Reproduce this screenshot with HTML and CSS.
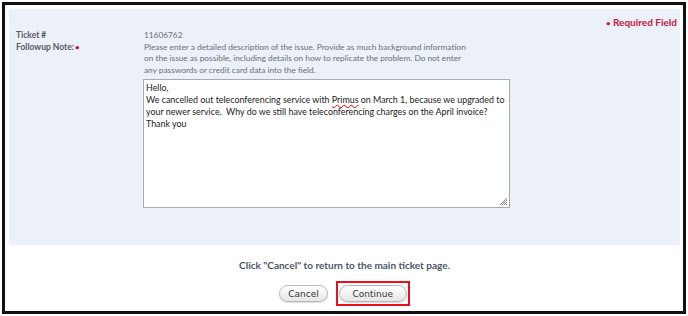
FILE: index.html
```html
<!DOCTYPE html>
<html>
<head>
<meta charset="utf-8">
<link rel="stylesheet" href="styles.css">
</head>
<body>
<div class="frame">
  <div class="panel">
    <div class="req"><span class="dot">&#8226;</span> Required Field</div>
    <div class="form">
      <div class="labels">
        <div class="label">Ticket #</div>
        <div class="label">Followup Note:<span class="star">&#8226;</span></div>
      </div>
      <div class="fields">
        <div class="tnum">11606762</div>
        <div class="help">Please enter a detailed description of the issue. Provide as much background information on the issue as possible, including details on how to replicate the problem. Do not enter any passwords or credit card data into the field.</div>
        <div class="ta">
          <div>Hello,</div>
          <div>We cancelled out teleconferencing service with <span class="spell">Primus</span> on March 1, because we upgraded to your newer service.&nbsp; Why do we still have teleconferencing charges on the April invoice?</div>
          <div>Thank you</div>
          <svg class="grip" width="10" height="10" viewBox="0 0 10 10"><path d="M9 2 L2 9 M9 4 L4 9 M9 6 L6 9 M9 8 L8 9" stroke="#888" stroke-width="1"/></svg>
        </div>
      </div>
    </div>
  </div>
  <div class="bottom">
    <div class="note">Click "Cancel" to return to the main ticket page.</div>
    <div class="btns">
      <button class="btn">Cancel</button>
      <div class="hl"><button class="btn cont">Continue</button></div>
    </div>
  </div>
</div>
</body>
</html>
```
FILE: styles.css
```css
html, body { margin: 0; padding: 0; background: #fff; }
body { font-family: Lato, "Open Sans", sans-serif; }
.frame {
  margin: 2px;
  width: 671px;
  height: 302px;
  border: 3px solid #111;
  padding: 4px 3px 0 4px;
  box-sizing: content-box;
  display: flex;
  flex-direction: column;
}
.panel {
  background: #ecf0f8;
  height: 236px;
  position: relative;
  padding: 15px 0 0 7px;
  box-sizing: border-box;
}
.req {
  position: absolute;
  right: 3px;
  top: 7px;
  color: #c8173f;
  font-weight: bold;
  font-size: 10px;
}
.req .dot { font-size: 8px; }
.form { display: flex; margin-top: 6px; }
.labels { width: 128px; }
.label { font-size: 8.5px; font-weight: bold; color: #555a66; line-height: 11.5px; }
.star { color: #d0102a; font-size: 8px; margin-left: 1px; }
.fields { width: 370px; }
.tnum, .help { font-size: 8.3px; color: #6b6f78; line-height: 11.5px; }
.help { width: 330px; }
.ta {
  margin-top: 3px;
  width: 367px;
  height: 129px;
  background: #fff;
  border: 1px solid #a9aab0;
  box-sizing: border-box;
  padding: 2px 2px;
  font-size: 8.9px;
  line-height: 12px;
  color: #222;
  position: relative;
  margin-left: -1px;
}
.spell { text-decoration: underline wavy #e00; text-decoration-thickness: 1px; text-underline-offset: 1px; }
.grip { position: absolute; right: 1px; bottom: 1px; }
.bottom { display: flex; flex-direction: column; align-items: center; }
.note { margin-top: 14px; font-size: 10px; font-weight: bold; color: #4a5568; }
.btns { display: flex; align-items: center; gap: 8px; margin-top: 10px; margin-left: 0; }
.btn {
  font-family: "DejaVu Sans", sans-serif;
  font-size: 9px;
  color: #333;
  height: 17px;
  padding: 0 8px;
  border: 1px solid #b8b8b8;
  border-radius: 9px;
  background: linear-gradient(#ffffff, #e6e6e6);
  box-shadow: 0 1px 1px rgba(0,0,0,0.15);
}
.hl { border: 2px solid #e8101c; padding: 2px 1px; display: flex; }
.cont { width: 68px; }
```
